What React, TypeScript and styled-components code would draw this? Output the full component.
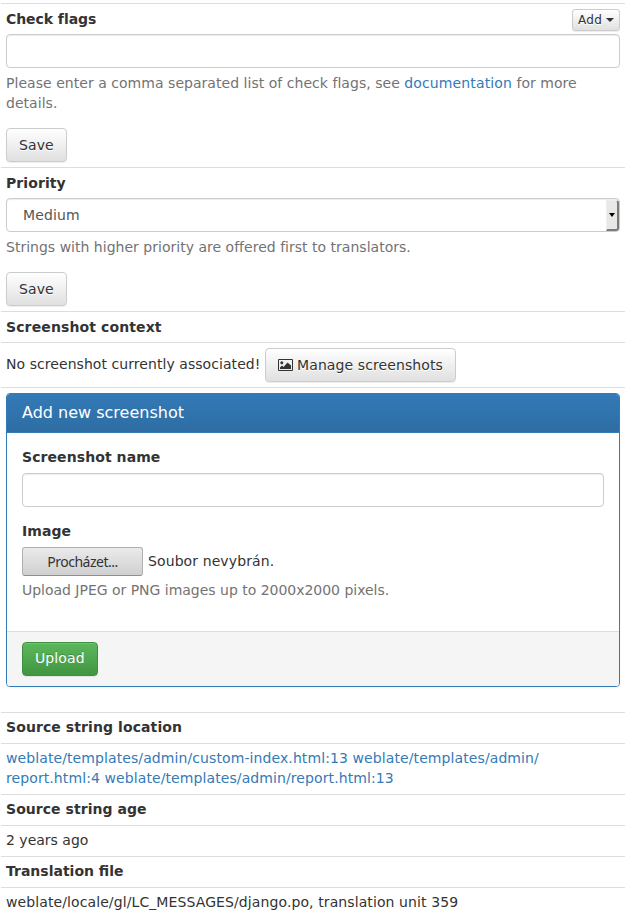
import React from 'react';
import styled, { createGlobalStyle } from 'styled-components';

const Global = createGlobalStyle`
  * { box-sizing: border-box; }
  body { margin: 0; background: #fff; color: #333; font: 14px/20px "DejaVu Sans", sans-serif; overflow: hidden; }
`;
const Page = styled.main`
  width: 624px;
  margin: 3px 0 0 1px;
`;
const Row = styled.section<{ $height: number; $top?: number; $spacing?: number }>`
  height: ${p => p.$height}px;
  padding: ${p => p.$top ?? 5}px 5px 5px;
  border-top: 1px solid #ddd;
  letter-spacing: ${p => p.$spacing ?? 0}px;
`;
const Heading = styled.div<{ $spacing?: number }>`
  display: flex;
  justify-content: space-between;
  align-items: flex-start;
  height: 20px;
  font-weight: bold;
  letter-spacing: ${p => p.$spacing ?? 0.08}px;
`;
const Button = styled.button<{ $kind?: 'small' | 'success' }>`
  display: inline-flex;
  align-items: center;
  justify-content: center;
  height: ${p => (p.$kind === 'small' ? 22 : 34)}px;
  padding: ${p => (p.$kind === 'small' ? '0 5px' : p.$kind === 'success' ? '0 12px 2px' : '0 12px')};
  border: 1px solid ${p => (p.$kind === 'success' ? '#3e8f3e' : '#ccc')};
  border-radius: ${p => (p.$kind === 'small' ? 3 : 4)}px;
  color: ${p => (p.$kind === 'success' ? '#fff' : '#333')};
  background: ${p => (p.$kind === 'success' ? 'linear-gradient(#5cb85c, #419641)' : 'linear-gradient(#fff, #e0e0e0)')};
  box-shadow: inset 0 1px 0 rgba(255, 255, 255, .15), 0 1px 1px rgba(0, 0, 0, .075);
  text-shadow: ${p => (p.$kind === 'success' ? '0 -1px 0 rgba(0,0,0,.2)' : '0 1px 0 #fff')};
  font: ${p => (p.$kind === 'small' ? 12 : 14)}px/20px "DejaVu Sans", sans-serif;
  letter-spacing: ${p => (p.$kind === 'small' ? 0.25 : 0.1)}px;
  white-space: nowrap;
  svg { margin-right: 4px; }
`;
const Caret = styled.span`
  margin-left: 4px;
  border: 4px solid transparent;
  border-top-color: #333;
  border-bottom: 0;
`;
const Input = styled.input`
  display: block;
  width: 100%;
  height: 34px;
  border: 1px solid #ccc;
  border-radius: 4px;
  box-shadow: inset 0 1px 1px rgba(0, 0, 0, .075);
`;
const Select = styled.div`
  display: flex;
  justify-content: space-between;
  height: 34px;
  padding-left: 16px;
  border: 1px solid #ccc;
  border-radius: 4px;
  line-height: 32px;
  letter-spacing: 0.12px;
  color: #555;
  box-shadow: inset 0 1px 1px rgba(0, 0, 0, .075);
`;
const SelectArrow = styled.span`
  display: flex;
  align-items: center;
  justify-content: center;
  width: 13px;
  margin-top: 1px;
  border: 1px solid #eee;
  border-right: 2px solid #7c7c7c;
  border-bottom: 2px solid #7c7c7c;
  border-radius: 0 3px 3px 0;
  background: #e8e8e7;
`;
const Help = styled.p<{ $spacing?: number }>`
  margin: 5px 0 15px;
  color: #737373;
  letter-spacing: ${p => p.$spacing ?? 0}px;
`;
const Link = styled.a`
  color: #337ab7;
  text-decoration: none;
`;
const HelpLink = styled(Link)`
  letter-spacing: 0.12px;
`;
const Field = styled.div`
  margin-top: 5px;
`;
const Association = styled.div`
  display: flex;
  align-items: flex-start;
  gap: 4.6px;
  line-height: 32px;
`;
const Panel = styled.section`
  display: flex;
  flex-direction: column;
  height: 294px;
  border: 1px solid #337ab7;
  border-radius: 4px;
  box-shadow: 0 1px 2px rgba(0, 0, 0, .05);
  overflow: hidden;
`;
const PanelHeader = styled.header`
  height: 39px;
  padding: 8px 15px;
  border-bottom: 1px solid #337ab7;
  color: #fff;
  font-size: 16px;
  line-height: 21px;
  background: linear-gradient(#337ab7, #2e6da4);
`;
const PanelBody = styled.div`
  flex: 1;
  padding: 14px 15px;
`;
const FormGroup = styled.div`
  margin-bottom: 14px;
`;
const Label = styled.label`
  display: block;
  margin-bottom: 6px;
  font-weight: bold;
  letter-spacing: 0.08px;
`;
const FileField = styled.div`
  display: flex;
  align-items: flex-start;
  height: 28px;
  gap: 5px;
  line-height: 28px;
  letter-spacing: 0.1px;
`;
const Browse = styled.button`
  width: 121px;
  height: 29px;
  padding: 0 0 1px;
  border: 1px solid #b0b0b0;
  border-bottom-color: #8e8e8e;
  border-radius: 3px;
  color: #333;
  background: linear-gradient(#eaeaea, #d0d0d0);
  font: 14px "Noto Sans", sans-serif;
  letter-spacing: -0.5px;
`;
const PanelFooter = styled.footer`
  height: 55px;
  padding: 10px 15px;
  border-top: 1px solid #ddd;
  background: #f5f5f5;
`;

function ImageIcon() {
  return (
    <svg width="15" height="14" viewBox="0 0 15 14">
      <path d="M.5 1.5h14v11H.5z" fill="none" stroke="#333" />
      <circle cx="3.8" cy="4.7" r="1.5" fill="#333" />
      <path d="M2 11V9.5l2-2 1.5 1.5L9.5 4.5 13 7.5V11z" fill="#333" />
    </svg>
  );
}

export default function App() {
  return (
    <>
      <Global />
      <Page>
        <Row $height={164}>
          <Heading $spacing={-0.06}>Check flags <Button $kind="small">Add<Caret /></Button></Heading>
          <Field><Input aria-label="Check flags" /></Field>
          <Help $spacing={0.037}>Please enter a comma separated list of check flags, see <HelpLink>documentation</HelpLink> for more details.</Help>
          <Button>Save</Button>
        </Row>
        <Row $height={144}>
          <Heading>Priority</Heading>
          <Field><Select>Medium<SelectArrow><svg width="6" height="4"><path d="M0 0h6L3 4z" /></svg></SelectArrow></Select></Field>
          <Help $spacing={0.015}>Strings with higher priority are offered first to translators.</Help>
          <Button>Save</Button>
        </Row>
        <Row $height={31}><Heading $spacing={0.12}>Screenshot context</Heading></Row>
        <Row $height={45} $spacing={0.06}><Association>No screenshot currently associated! <Button><ImageIcon />Manage screenshots</Button></Association></Row>
        <Row $height={325}>
          <Panel>
            <PanelHeader>Add new screenshot</PanelHeader>
            <PanelBody>
              <FormGroup>
                <Label>Screenshot name</Label>
                <Input aria-label="Screenshot name" />
              </FormGroup>
              <Label>Image</Label>
              <FileField><Browse>Procházet...</Browse>Soubor nevybrán.</FileField>
              <Help $spacing={-0.02}>Upload JPEG or PNG images up to 2000x2000 pixels.</Help>
            </PanelBody>
            <PanelFooter><Button $kind="success">Upload</Button></PanelFooter>
          </Panel>
        </Row>
        <Row $height={31} $top={4}><Heading $spacing={0.09}>Source string location</Heading></Row>
        <Row $height={51} $top={4} $spacing={0.095}><Link>weblate/templates/admin/custom-index.html:13</Link> <Link>weblate/templates/admin/<wbr />report.html:4</Link> <Link>weblate/templates/admin/report.html:13</Link></Row>
        <Row $height={31} $top={4}><Heading $spacing={0.05}>Source string age</Heading></Row>
        <Row $height={31} $top={4}>2 years ago</Row>
        <Row $height={31} $top={4}><Heading $spacing={0}>Translation file</Heading></Row>
        <Row $height={31} $top={4} $spacing={0.1}>weblate/locale/gl/LC_MESSAGES/django.po, translation unit 359</Row>
      </Page>
    </>
  );
}
